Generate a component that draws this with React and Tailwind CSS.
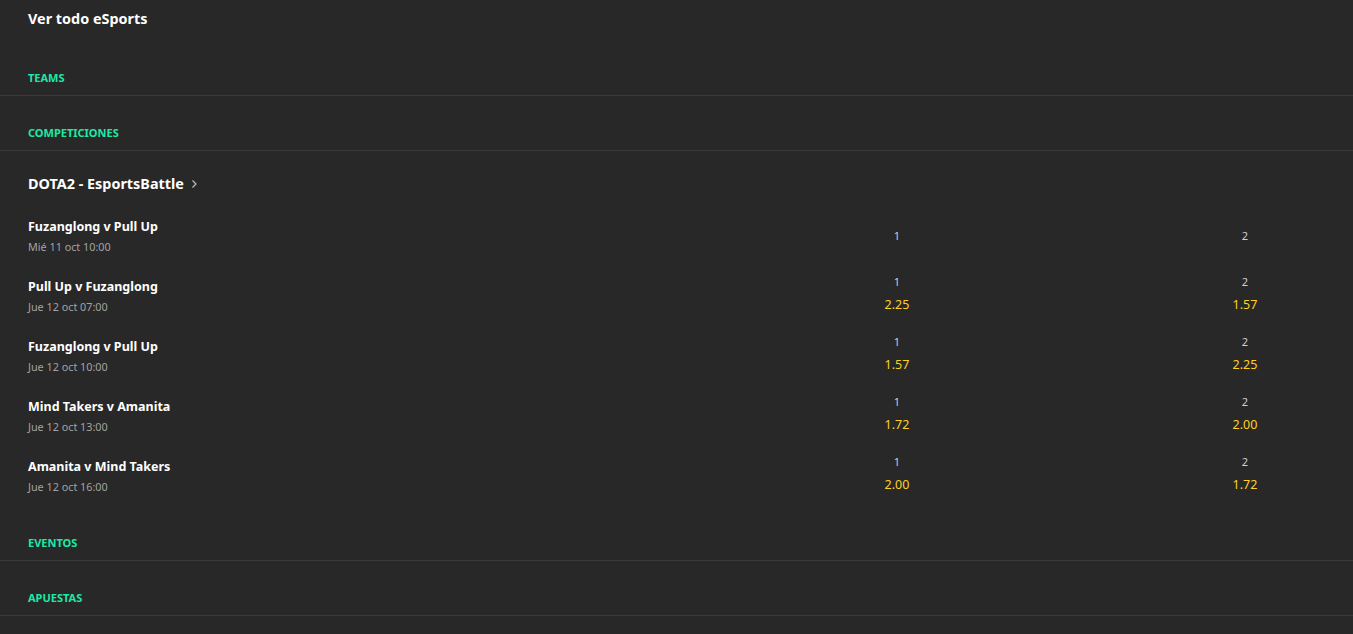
import React from 'react';

const matches = [
  { name: 'Fuzanglong v Pull Up', date: 'Mié 11 oct 10:00', odds: null },
  { name: 'Pull Up v Fuzanglong', date: 'Jue 12 oct 07:00', odds: ['2.25', '1.57'] },
  { name: 'Fuzanglong v Pull Up', date: 'Jue 12 oct 10:00', odds: ['1.57', '2.25'] },
  { name: 'Mind Takers v Amanita', date: 'Jue 12 oct 13:00', odds: ['1.72', '2.00'] },
  { name: 'Amanita v Mind Takers', date: 'Jue 12 oct 16:00', odds: ['2.00', '1.72'] },
];

const SectionHeader = ({ label }) => (
  <div className="h-[55px] flex items-end border-b border-[#3a3a3a] px-[28px] pb-[12px]">
    <span className="text-[11px] font-bold uppercase text-[#1de9a6] leading-none">{label}</span>
  </div>
);

const OddsCell = ({ label, price }) => (
  <div className={`w-[174px] flex flex-col items-center ${price ? 'pb-[4px]' : ''}`}>
    <span className="text-[11px] text-[#d0d0d0] leading-[14px]">{label}</span>
    {price && <span className="text-[12.5px] text-[#ffd21f] leading-[16px] mt-[8px]">{price}</span>}
  </div>
);

const App = () => {
  return (
    <div
      className="min-h-screen bg-[#282828] text-white"
      style={{ fontFamily: '"Noto Sans", "Open Sans", sans-serif' }}
    >
      <div className="px-[28px] pt-[9px] h-[41px]">
        <h1 className="text-[14.4px] font-bold leading-[20px]">Ver todo eSports</h1>
      </div>

      <SectionHeader label="Teams" />
      <SectionHeader label="Competiciones" />

      {/* Competition block */}
      <div className="px-[28px] pt-[23px] h-[55px]">
        <div className="flex items-center gap-[6px]">
          <h2 className="text-[14.4px] font-bold leading-[20px]">DOTA2 - EsportsBattle</h2>
          <svg width="8" height="10" viewBox="0 0 8 10" fill="none" stroke="#bdbdbd" strokeWidth="1.2">
            <path d="M2.5 1.5 L6 5 L2.5 8.5" />
          </svg>
        </div>
      </div>

      <div>
        {matches.map((m, i) => (
          <div key={i} className="h-[60px] flex items-center pl-[28px] pr-[21px]">
            <div className="flex-1 flex flex-col">
              <span className="text-[12.5px] font-bold leading-[18px]">{m.name}</span>
              <span className="text-[10.8px] text-[#a3a3a3] leading-[14px] mt-[4px]">{m.date}</span>
            </div>
            <OddsCell label="1" price={m.odds && m.odds[0]} />
            <div className="w-[174px]" />
            <OddsCell label="2" price={m.odds && m.odds[1]} />
          </div>
        ))}
      </div>

      <SectionHeader label="Eventos" />
      <SectionHeader label="Apuestas" />
    </div>
  );
};

export default App;
